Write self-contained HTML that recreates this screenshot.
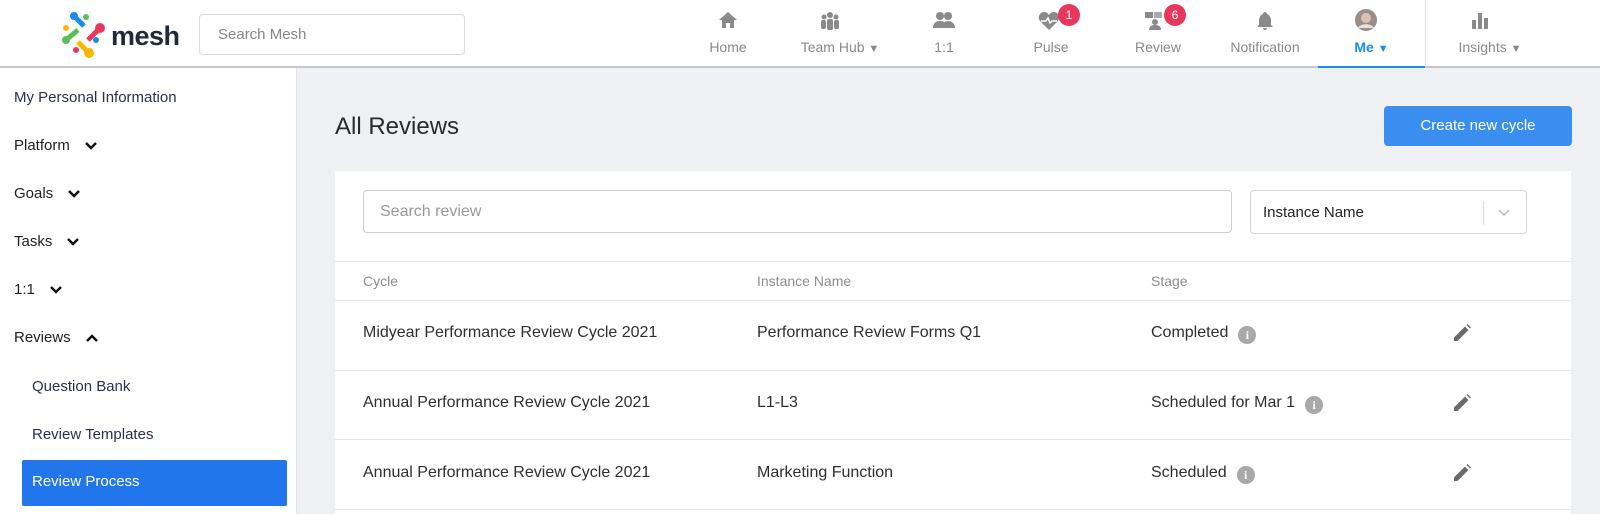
<!DOCTYPE html>
<html><head><meta charset="utf-8">
<style>
*{box-sizing:border-box;margin:0;padding:0}
body{width:1600px;height:514px;overflow:hidden;background:#eef0f4;font-family:"Liberation Sans",sans-serif;position:relative;color:#2b2b2b}
.abs{position:absolute}
.hdr{left:0;top:0;width:1600px;height:68px;background:#fff;border-bottom:2px solid #c8c8c8}
.nav{position:absolute;top:0;height:66px;text-align:center;color:#8a8a8a;font-size:14px}
.nav .lbl{position:absolute;top:39px;left:0;right:0;white-space:nowrap}
.nav svg{position:absolute;top:11px;left:50%;transform:translateX(-50%)}
.badge{position:absolute;top:4px;width:22px;height:22px;border-radius:11px;background:#e8365d;color:#fff;font-size:12px;line-height:22px;text-align:center}
.side{left:0;top:68px;width:297px;height:446px;background:#fff;border-right:1px solid #e2e4e8}
.si{position:absolute;left:14px;font-size:15px;color:#222;line-height:20px}
.si svg{vertical-align:middle;margin-left:14px}
.card{left:335px;top:171px;width:1236px;height:343px;background:#fff}
.sep{position:absolute;left:0;width:1236px;height:1px;background:#e6e6e6}
.cell{position:absolute;font-size:16px;color:#2f2f2f;line-height:20px;white-space:nowrap}
.th{position:absolute;font-size:14px;color:#8d8d8d;line-height:20px}
.info{display:inline-block;width:18px;height:18px;border-radius:9px;background:#a8a8a8;color:#fff;font-size:12px;font-weight:bold;text-align:center;line-height:18px;vertical-align:-2px;margin-left:10px;font-family:"Liberation Serif",serif}
</style></head><body>
<div class="abs hdr">
  <svg class="abs" style="left:62px;top:12px" width="50" height="46" viewBox="0 0 50 46">
    <line x1="12" y1="4" x2="22" y2="14" stroke="#1a8cf0" stroke-width="5"/><circle cx="12" cy="4" r="4" fill="#1a8cf0"/><circle cx="24" cy="5" r="3" fill="#58c05a"/>
    <circle cx="4" cy="16" r="3" fill="#f8b900"/><line x1="4" y1="28" x2="16" y2="18" stroke="#58c05a" stroke-width="5"/><circle cx="4" cy="28" r="4" fill="#58c05a"/>
    <line x1="26" y1="28" x2="36" y2="18" stroke="#e8365d" stroke-width="5"/><circle cx="38" cy="16" r="5" fill="#e8365d"/><circle cx="34" cy="28" r="3" fill="#1a8cf0"/>
    <line x1="16" y1="30" x2="26" y2="40" stroke="#f8b900" stroke-width="5"/><circle cx="27" cy="41" r="5" fill="#f8b900"/><circle cx="14" cy="38" r="3" fill="#e8365d"/>
  </svg>
  <div class="abs" style="left:111px;top:21px;font-size:27px;font-weight:bold;color:#1f2a3a;letter-spacing:-0.5px">mesh</div>
  <div class="abs" style="left:199px;top:14px;width:266px;height:41px;border:1px solid #dcdcdc;border-radius:4px;font-size:15px;color:#888;padding:11px 0 0 18px">Search Mesh</div>

  <div class="nav" style="left:698px;width:60px"><svg width="20" height="18" viewBox="0 0 20 18"><path d="M10 1L1 9h3v8h4v-5h4v5h4V9h3z" fill="#8a8a8a"/></svg><div class="lbl">Home</div></div>
  <div class="nav" style="left:790px;width:100px"><svg width="22" height="20" viewBox="0 0 22 20" style="margin-left:-10px"><circle cx="11" cy="4" r="3" fill="#8a8a8a"/><circle cx="5" cy="6" r="2.5" fill="#8a8a8a"/><circle cx="17" cy="6" r="2.5" fill="#8a8a8a"/><rect x="8" y="8" width="6" height="11" rx="2" fill="#8a8a8a"/><rect x="2" y="9" width="5" height="9" rx="2" fill="#8a8a8a"/><rect x="15" y="9" width="5" height="9" rx="2" fill="#8a8a8a"/></svg><div class="lbl">Team Hub <span style="font-size:11px">▼</span></div></div>
  <div class="nav" style="left:919px;width:50px"><svg width="22" height="18" viewBox="0 0 22 18"><circle cx="7" cy="5" r="4" fill="#8a8a8a"/><circle cx="15" cy="5" r="4" fill="#8a8a8a"/><path d="M0 17c0-5 3-7 7-7s7 2 7 7zM10 17c0-5 2-7 5-7s7 2 7 7z" fill="#8a8a8a"/></svg><div class="lbl">1:1</div></div>
  <div class="nav" style="left:1021px;width:60px"><svg width="22" height="20" viewBox="0 0 22 20" style="margin-left:-2px"><path d="M11 19L2 10C-1 6 2 1 6 1c2 0 4 1 5 3 1-2 3-3 5-3 4 0 7 5 4 9z" fill="#8a8a8a"/><path d="M3 10h5l2-3 2 5 2-2h5" stroke="#fff" stroke-width="1.5" fill="none"/></svg><div class="lbl">Pulse</div><div class="badge" style="left:37px">1</div></div>
  <div class="nav" style="left:1128px;width:60px"><svg width="22" height="20" viewBox="0 0 22 20" style="margin-left:-3px"><rect x="1" y="1" width="8" height="6" fill="#8a8a8a"/><rect x="10" y="1" width="8" height="6" fill="#aaa"/><circle cx="11" cy="11" r="3" fill="#8a8a8a"/><path d="M5 19c0-4 3-5 6-5s6 1 6 5z" fill="#8a8a8a"/></svg><div class="lbl">Review</div><div class="badge" style="left:36px">6</div></div>
  <div class="nav" style="left:1225px;width:80px"><svg width="18" height="20" viewBox="0 0 18 20"><path d="M9 1c1 0 2 1 2 2 3 1 4 4 4 7v4l2 2H1l2-2v-4c0-3 1-6 4-7 0-1 1-2 2-2zM7 17h4c0 1-1 2-2 2s-2-1-2-2z" fill="#8a8a8a"/></svg><div class="lbl">Notification</div></div>
  <div class="nav" style="left:1318px;width:107px;border-bottom:2px solid #1a8cf0;height:68px"><svg width="22" height="22" viewBox="0 0 22 22" style="margin-left:-6px;top:9px"><circle cx="11" cy="11" r="11" fill="#9a8e86"/><circle cx="11" cy="9" r="5" fill="#d9c4b4"/><path d="M3 19c2-5 14-5 16 0" fill="#e8e2dc"/></svg><div class="lbl" style="color:#1a8cf0;font-weight:bold">Me <span style="font-size:11px">▼</span></div></div>
  <div class="abs" style="left:1425px;top:0;width:1px;height:66px;background:#e2e2e2"></div>
  <div class="nav" style="left:1440px;width:100px"><svg width="18" height="18" viewBox="0 0 18 18" style="margin-left:-10px"><rect x="1" y="9" width="4" height="9" fill="#8a8a8a"/><rect x="7" y="2" width="4" height="16" fill="#8a8a8a"/><rect x="13" y="7" width="4" height="11" fill="#8a8a8a"/></svg><div class="lbl">Insights <span style="font-size:11px">▼</span></div></div>
</div>

<div class="abs side">
  <div class="si" style="top:20px;color:#2a3245">My Personal Information</div>
  <div class="si" style="top:68px">Platform<svg width="14" height="10" viewBox="0 0 14 10"><path d="M2 2l5 5 5-5" stroke="#111" stroke-width="2.4" fill="none"/></svg></div>
  <div class="si" style="top:116px">Goals<svg width="14" height="10" viewBox="0 0 14 10"><path d="M2 2l5 5 5-5" stroke="#111" stroke-width="2.4" fill="none"/></svg></div>
  <div class="si" style="top:164px">Tasks<svg width="14" height="10" viewBox="0 0 14 10"><path d="M2 2l5 5 5-5" stroke="#111" stroke-width="2.4" fill="none"/></svg></div>
  <div class="si" style="top:212px">1:1<svg width="14" height="10" viewBox="0 0 14 10"><path d="M2 2l5 5 5-5" stroke="#111" stroke-width="2.4" fill="none"/></svg></div>
  <div class="si" style="top:260px">Reviews<svg width="14" height="10" viewBox="0 0 14 10"><path d="M2 8l5-5 5 5" stroke="#111" stroke-width="2.4" fill="none"/></svg></div>
  <div class="si" style="top:309px;left:32px;color:#2a3245">Question Bank</div>
  <div class="si" style="top:357px;left:32px;color:#2a3245">Review Templates</div>
  <div class="abs" style="left:22px;top:392px;width:265px;height:46px;background:#2176ec;border-radius:2px;color:#fff;font-size:15px;padding:13px 0 0 10px">Review Process</div>
</div>

<div class="abs" style="left:335px;top:113px;font-size:24px;color:#2b2b2b">All Reviews</div>
<div class="abs" style="left:1384px;top:106px;width:188px;height:40px;background:#3a8ef0;border-radius:4px;color:#fff;font-size:15px;text-align:center;line-height:40px">Create new cycle</div>

<div class="abs card">
  <div class="abs" style="left:28px;top:19px;width:869px;height:43px;border:1px solid #cfcfcf;border-radius:4px;font-size:16px;color:#999;padding:12px 0 0 16px">Search review</div>
  <div class="abs" style="left:915px;top:19px;width:277px;height:44px;border:1px solid #d6d6d6;border-radius:4px;font-size:15px;color:#222;padding:13px 0 0 12px">Instance Name
    <div class="abs" style="left:232px;top:10px;width:1px;height:24px;background:#ddd"></div>
    <svg class="abs" style="left:246px;top:17px" width="14" height="9" viewBox="0 0 14 9"><path d="M2 2l5 5 5-5" stroke="#bbb" stroke-width="1.5" fill="none"/></svg>
  </div>
  <div class="sep" style="top:90px"></div>
  <div class="th" style="left:28px;top:100px">Cycle</div>
  <div class="th" style="left:422px;top:100px">Instance Name</div>
  <div class="th" style="left:816px;top:100px">Stage</div>
  <div class="sep" style="top:129px"></div>

  <div class="cell" style="left:28px;top:152px">Midyear Performance Review Cycle 2021</div>
  <div class="cell" style="left:422px;top:152px">Performance Review Forms Q1</div>
  <div class="cell" style="left:816px;top:152px">Completed<span class="info">i</span></div>
  <div class="sep" style="top:199px"></div>

  <div class="cell" style="left:28px;top:222px">Annual Performance Review Cycle 2021</div>
  <div class="cell" style="left:422px;top:222px">L1-L3</div>
  <div class="cell" style="left:816px;top:222px">Scheduled for Mar 1<span class="info">i</span></div>
  <div class="sep" style="top:268px"></div>

  <div class="cell" style="left:28px;top:292px">Annual Performance Review Cycle 2021</div>
  <div class="cell" style="left:422px;top:292px">Marketing Function</div>
  <div class="cell" style="left:816px;top:292px">Scheduled<span class="info">i</span></div>
  <div class="sep" style="top:338px"></div>

  <svg class="abs" style="left:1118px;top:153px" width="18" height="18" viewBox="0 0 18 18"><path d="M1 17v-3.5L12 2.5 15.5 6 4.5 17zM13.5 1l1-1 3.5 3.5-1 1z" fill="#6a6a6a"/></svg>
  <svg class="abs" style="left:1118px;top:223px" width="18" height="18" viewBox="0 0 18 18"><path d="M1 17v-3.5L12 2.5 15.5 6 4.5 17zM13.5 1l1-1 3.5 3.5-1 1z" fill="#6a6a6a"/></svg>
  <svg class="abs" style="left:1118px;top:293px" width="18" height="18" viewBox="0 0 18 18"><path d="M1 17v-3.5L12 2.5 15.5 6 4.5 17zM13.5 1l1-1 3.5 3.5-1 1z" fill="#6a6a6a"/></svg>
</div>
</body></html>
